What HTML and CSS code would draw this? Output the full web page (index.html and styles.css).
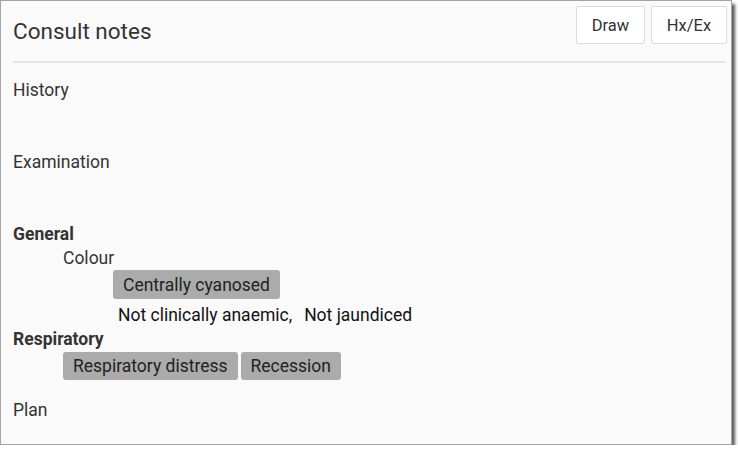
FILE: index.html
```html
<!DOCTYPE html>
<html>
<head>
<meta charset="utf-8">
<link rel="stylesheet" href="styles.css">
</head>
<body>
<div class="panel">
  <div class="header">
    <h1 class="title">Consult notes</h1>
    <div class="actions">
      <button class="btn btn-draw">Draw</button>
      <button class="btn btn-hx">Hx/Ex</button>
    </div>
  </div>
  <div class="divider"></div>
  <div class="content">
    <div class="section section-history">History</div>
    <div class="section section-exam">Examination</div>
    <div class="group">
      <div class="group-title">General</div>
      <div class="sub">
        <div class="sub-title">Colour</div>
        <div class="chips chips-deep">
          <span class="chip">Centrally cyanosed</span>
        </div>
        <div class="negatives">Not clinically anaemic,<span class="neg-gap"></span>Not jaundiced</div>
      </div>
      <div class="group-title group-title-resp">Respiratory</div>
      <div class="chips chips-sub">
        <span class="chip">Respiratory distress</span><span class="chip">Recession</span>
      </div>
    </div>
    <div class="section section-plan">Plan</div>
  </div>
</div>
</body>
</html>
```
FILE: styles.css
```css
html, body {
  margin: 0;
  padding: 0;
  background: #ffffff;
}
body {
  font-family: Roboto, "Liberation Sans", sans-serif;
  color: #333333;
}
.panel {
  box-sizing: border-box;
  width: 732px;
  height: 445px;
  border: 1px solid #a3a3a3;
  background: #fafafa;
  box-shadow: 3px 4px 3px #5a5a5a;
}
.header {
  display: flex;
  justify-content: space-between;
  align-items: center;
  height: 60px;
  padding-left: 12px;
  padding-right: 4px;
}
.title {
  margin: 0;
  font-size: 22.5px;
  font-weight: 400;
  color: #333333;
}
.actions {
  display: flex;
  gap: 6px;
  align-self: flex-start;
  margin-top: 5px;
}
.btn {
  box-sizing: border-box;
  height: 38px;
  border: 1px solid #dcdcdc;
  border-radius: 2px;
  background: #ffffff;
  font-family: Roboto, "Liberation Sans", sans-serif;
  font-size: 16.5px;
  color: #333333;
  padding: 0;
}
.btn-draw { width: 69px; }
.btn-hx { width: 76px; }
.divider {
  height: 2px;
  background: #e6e6e6;
  margin: 0 6px 0 12px;
}
.content {
  padding-left: 12px;
  font-size: 17.5px;
  line-height: 23px;
}
.section-history {
  margin-top: 16px;
}
.section-exam {
  margin-top: 49px;
}
.group {
  margin-top: 49px;
}
.group-title {
  font-weight: 700;
  color: #333333;
}
.group-title-resp {
  margin-top: 1px;
}
.sub {
  padding-left: 50px;
}
.sub-title {
  margin-top: 1px;
  color: #333333;
}
.chips {
  display: flex;
  gap: 3px;
}
.chips-deep {
  padding-left: 50px;
}
.chips-sub {
  padding-left: 50px;
  margin-top: 1px;
}
.chip {
  display: block;
  height: 29px;
  box-sizing: border-box;
  background: #acabab;
  border-radius: 3px;
  padding: 4px 10px 2px;
  color: #222222;
  font-size: 17.5px;
  line-height: 23px;
}
.chips-sub .chip {
  height: 28px;
  padding-top: 3px;
  padding-bottom: 2px;
}
.negatives {
  padding-left: 55px;
  margin-top: 5px;
  color: #111111;
}
.neg-gap {
  display: inline-block;
  width: 12px;
}
.section-plan {
  margin-top: 19px;
}
```
